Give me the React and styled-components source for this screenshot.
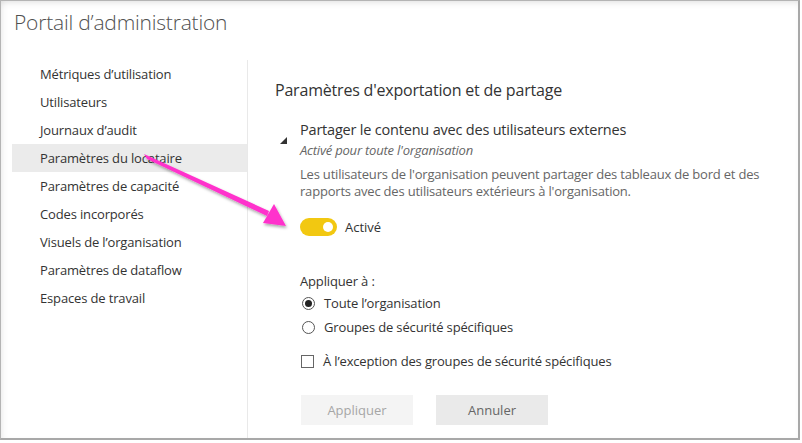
import React from 'react';
import styled, { createGlobalStyle } from 'styled-components';

const GlobalStyle = createGlobalStyle`
  html, body {
    margin: 0;
    padding: 0;
    background: #ffffff;
  }
  body {
    font-family: "Open Sans", "Noto Sans", "Liberation Sans", sans-serif;
    color: #333;
  }
  * {
    box-sizing: border-box;
  }
`;

const Frame = styled.div`
  position: relative;
  width: 800px;
  height: 440px;
  border-top: 1px solid #b4b4b4;
  border-left: 1px solid #b4b4b4;
  border-right: 2px solid #a8a8a8;
  border-bottom: 2px solid #a8a8a8;
  box-shadow: inset 0 5px 6px -3px rgba(0, 0, 0, 0.1), inset 5px 0 6px -3px rgba(0, 0, 0, 0.06);
  overflow: hidden;
  background: #fff;
`;

const Header = styled.header`
  height: 59px;
  padding: 7px 0 0 13px;
`;

const Title = styled.h1`
  margin: 0;
  font-size: 21px;
  font-weight: 300;
  color: #505050;
  letter-spacing: -0.2px;
`;

const Body = styled.div`
  display: flex;
  height: 378px;
`;

const Sidebar = styled.nav`
  width: 236px;
  margin-left: 11px;
  border-right: 1px solid #e9e9e9;
  display: flex;
  flex-direction: column;
`;

const NavItem = styled.div`
  height: 28px;
  line-height: 28px;
  padding-left: 28px;
  font-size: 13px;
  color: #333;
  background: ${p => (p.$active ? '#ebebeb' : 'transparent')};
  letter-spacing: -0.15px;
`;

const Content = styled.main`
  flex: 1;
  padding: 19px 0 0 27px;
`;

const Heading = styled.h2`
  margin: 0;
  font-size: 16px;
  line-height: 22px;
  font-weight: 400;
  color: #333;
  letter-spacing: -0.2px;
`;

const Section = styled.section`
  display: flex;
  margin-top: 19px;
`;

const Caret = styled.div`
  width: 25px;
  padding: 7px 0 0 5px;
`;

const SectionBody = styled.div`
  flex: 1;
  display: flex;
  flex-direction: column;
`;

const SectionTitle = styled.div`
  font-size: 14.5px;
  line-height: 20px;
  color: #333;
  letter-spacing: -0.2px;
`;

const Status = styled.div`
  margin-top: 2px;
  font-size: 13px;
  line-height: 16px;
  font-style: italic;
  color: #666;
  letter-spacing: -0.2px;
`;

const Description = styled.p`
  margin: 8px 0 0;
  font-size: 13px;
  line-height: 17px;
  color: #666;
  letter-spacing: -0.2px;
  max-width: 480px;
`;

const ToggleRow = styled.div`
  display: flex;
  align-items: center;
  gap: 8px;
  margin-top: 18px;
  font-size: 13px;
  color: #333;
`;

const Track = styled.span`
  width: 37px;
  height: 18px;
  border-radius: 9px;
  background: #f2c811;
  display: flex;
  align-items: center;
  justify-content: flex-end;
  padding-right: 4px;
`;

const Knob = styled.span`
  width: 10px;
  height: 10px;
  border-radius: 50%;
  background: #fff;
`;

const ApplyLabel = styled.div`
  margin-top: 36px;
  font-size: 13px;
  line-height: 18px;
  color: #333;
  letter-spacing: -0.15px;
`;

const Option = styled.label`
  display: flex;
  align-items: center;
  gap: 9px;
  height: 24px;
  font-size: 13px;
  color: #333;
  margin-top: ${p => p.$gap || 0}px;
  letter-spacing: -0.15px;
`;

const Radio = styled.span`
  width: 13px;
  height: 13px;
  border-radius: 50%;
  border: 1px solid #555;
  margin-left: 2px;
  display: flex;
  align-items: center;
  justify-content: center;
  &::after {
    content: '';
    width: 7px;
    height: 7px;
    border-radius: 50%;
    background: ${p => (p.$checked ? '#222' : 'transparent')};
  }
`;

const Checkbox = styled.span`
  width: 13px;
  height: 13px;
  border: 1px solid #666;
  margin-left: 1px;
`;

const Buttons = styled.div`
  display: flex;
  gap: 23px;
  margin: 22px 0 0 1px;
`;

const Button = styled.button`
  width: 112px;
  height: 30px;
  border: none;
  font-family: inherit;
  font-size: 13px;
  background: ${p => (p.$disabled ? '#f4f4f4' : '#eaeaea')};
  color: ${p => (p.$disabled ? '#a6a6a6' : '#666')};
`;

const ArrowLayer = styled.svg`
  position: absolute;
  left: 0;
  top: 0;
  pointer-events: none;
`;

const navItems = [
  'Métriques d’utilisation',
  'Utilisateurs',
  'Journaux d’audit',
  'Paramètres du locataire',
  'Paramètres de capacité',
  'Codes incorporés',
  'Visuels de l’organisation',
  'Paramètres de dataflow',
  'Espaces de travail',
];

export default function App() {
  return (
    <>
      <GlobalStyle />
      <Frame>
        <Header>
          <Title>Portail d’administration</Title>
        </Header>
        <Body>
          <Sidebar>
            {navItems.map((item, i) => (
              <NavItem key={item} $active={i === 3}>
                {item}
              </NavItem>
            ))}
          </Sidebar>
          <Content>
            <Heading>Paramètres d'exportation et de partage</Heading>
            <Section>
              <Caret>
                <svg width="7" height="7" viewBox="0 0 7 7">
                  <polygon points="7,0 7,7 0,7" fill="#333" />
                </svg>
              </Caret>
              <SectionBody>
                <SectionTitle>Partager le contenu avec des utilisateurs externes</SectionTitle>
                <Status>Activé pour toute l'organisation</Status>
                <Description>
                  Les utilisateurs de l'organisation peuvent partager des tableaux de bord et des
                  rapports avec des utilisateurs extérieurs à l'organisation.
                </Description>
                <ToggleRow>
                  <Track>
                    <Knob />
                  </Track>
                  Activé
                </ToggleRow>
                <ApplyLabel>Appliquer à :</ApplyLabel>
                <Option $gap={1}>
                  <Radio $checked />
                  Toute l’organisation
                </Option>
                <Option>
                  <Radio />
                  Groupes de sécurité spécifiques
                </Option>
                <Option $gap={10}>
                  <Checkbox />
                  À l’exception des groupes de sécurité spécifiques
                </Option>
                <Buttons>
                  <Button $disabled>Appliquer</Button>
                  <Button>Annuler</Button>
                </Buttons>
              </SectionBody>
            </Section>
          </Content>
        </Body>
        <ArrowLayer width="800" height="440" viewBox="0 0 800 440">
          <defs>
            <filter id="arrowShadow" x="-20%" y="-20%" width="140%" height="140%">
              <feDropShadow dx="1" dy="2" stdDeviation="1.5" floodColor="#000" floodOpacity="0.35" />
            </filter>
          </defs>
          <g filter="url(#arrowShadow)" fill="#ff33cc" stroke="none">
            <polygon points="143,153 146,158 266,215 268,210" />
            <polygon points="285,225 262,222 273,203" />
          </g>
        </ArrowLayer>
      </Frame>
    </>
  );
}
